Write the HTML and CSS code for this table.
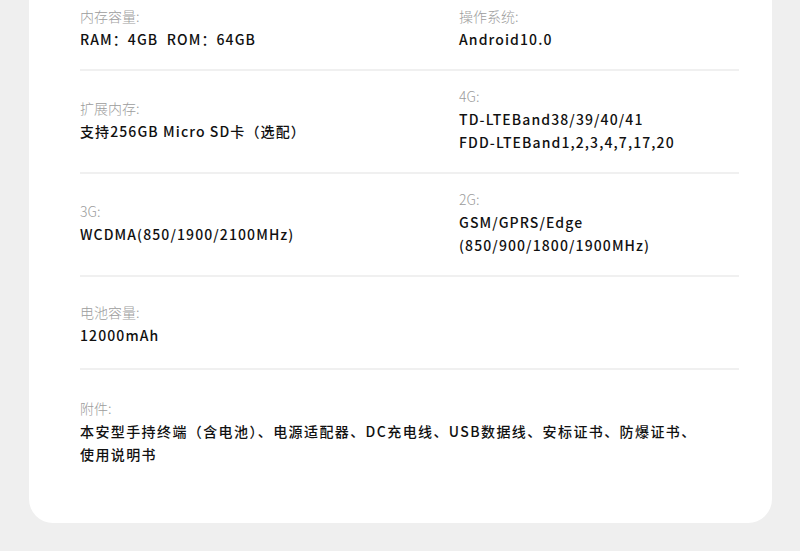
FILE: index.html
```html
<!DOCTYPE html>
<html lang="zh-CN">
<head>
    <meta charset="UTF-8">
    <meta name="viewport" content="width=device-width, initial-scale=1.0">
    <title>产品参数</title>
    <link rel="stylesheet" href="styles.css">
</head>
<body>
    <div class="page">
        <div class="card">
            <div class="row">
                <div class="item">
                    <div class="label">内存容量:</div>
                    <div class="value">RAM：4GB&nbsp;&nbsp;ROM：64GB</div>
                </div>
                <div class="item">
                    <div class="label">操作系统:</div>
                    <div class="value">Android10.0</div>
                </div>
            </div>

            <div class="row">
                <div class="item">
                    <div class="label">扩展内存:</div>
                    <div class="value">支持256GB Micro SD卡（选配）</div>
                </div>
                <div class="item">
                    <div class="label">4G:</div>
                    <div class="value">TD-LTEBand38/39/40/41<br>FDD-LTEBand1,2,3,4,7,17,20</div>
                </div>
            </div>

            <div class="row">
                <div class="item">
                    <div class="label">3G:</div>
                    <div class="value">WCDMA(850/1900/2100MHz)</div>
                </div>
                <div class="item">
                    <div class="label">2G:</div>
                    <div class="value">GSM/GPRS/Edge<br>(850/900/1800/1900MHz)</div>
                </div>
            </div>

            <div class="row single">
                <div class="item">
                    <div class="label">电池容量:</div>
                    <div class="value">12000mAh</div>
                </div>
            </div>

            <div class="row single last">
                <div class="item">
                    <div class="label">附件:</div>
                    <div class="value">本安型手持终端（含电池）、电源适配器、DC充电线、USB数据线、安标证书、防爆证书、使用说明书</div>
                </div>
            </div>
        </div>
    </div>
</body>
</html>
```

FILE: styles.css
```css
body {
    margin: 0;
    background: #efefef;
    font-family: "Noto Sans CJK SC", "Noto Sans", sans-serif;
}
.page {
    padding: 0 28px 28px 29px;
}
.card {
    margin-top: -9px;
    background: #fff;
    border-radius: 0 0 24px 24px;
    padding: 0 33px 57px 51px;
}
.row {
    display: grid;
    grid-template-columns: 379px 1fr;
    align-items: center;
    padding: 14px 0 18px;
    border-bottom: 2px solid #f0f0f0;
}
.row.single {
    grid-template-columns: 1fr;
    padding: 24px 0 21px;
}
.row.last {
    padding: 27px 0 0;
    border-bottom: none;
}
.label {
    font-size: 14px;
    line-height: 23px;
    font-weight: 300;
    color: #9c9c9c;
}
.value {
    font-size: 14px;
    line-height: 23px;
    font-weight: 500;
    color: #111;
    letter-spacing: 1.1px;
}
.last .value {
    max-width: 630px;
    letter-spacing: 1.4px;
}
```
